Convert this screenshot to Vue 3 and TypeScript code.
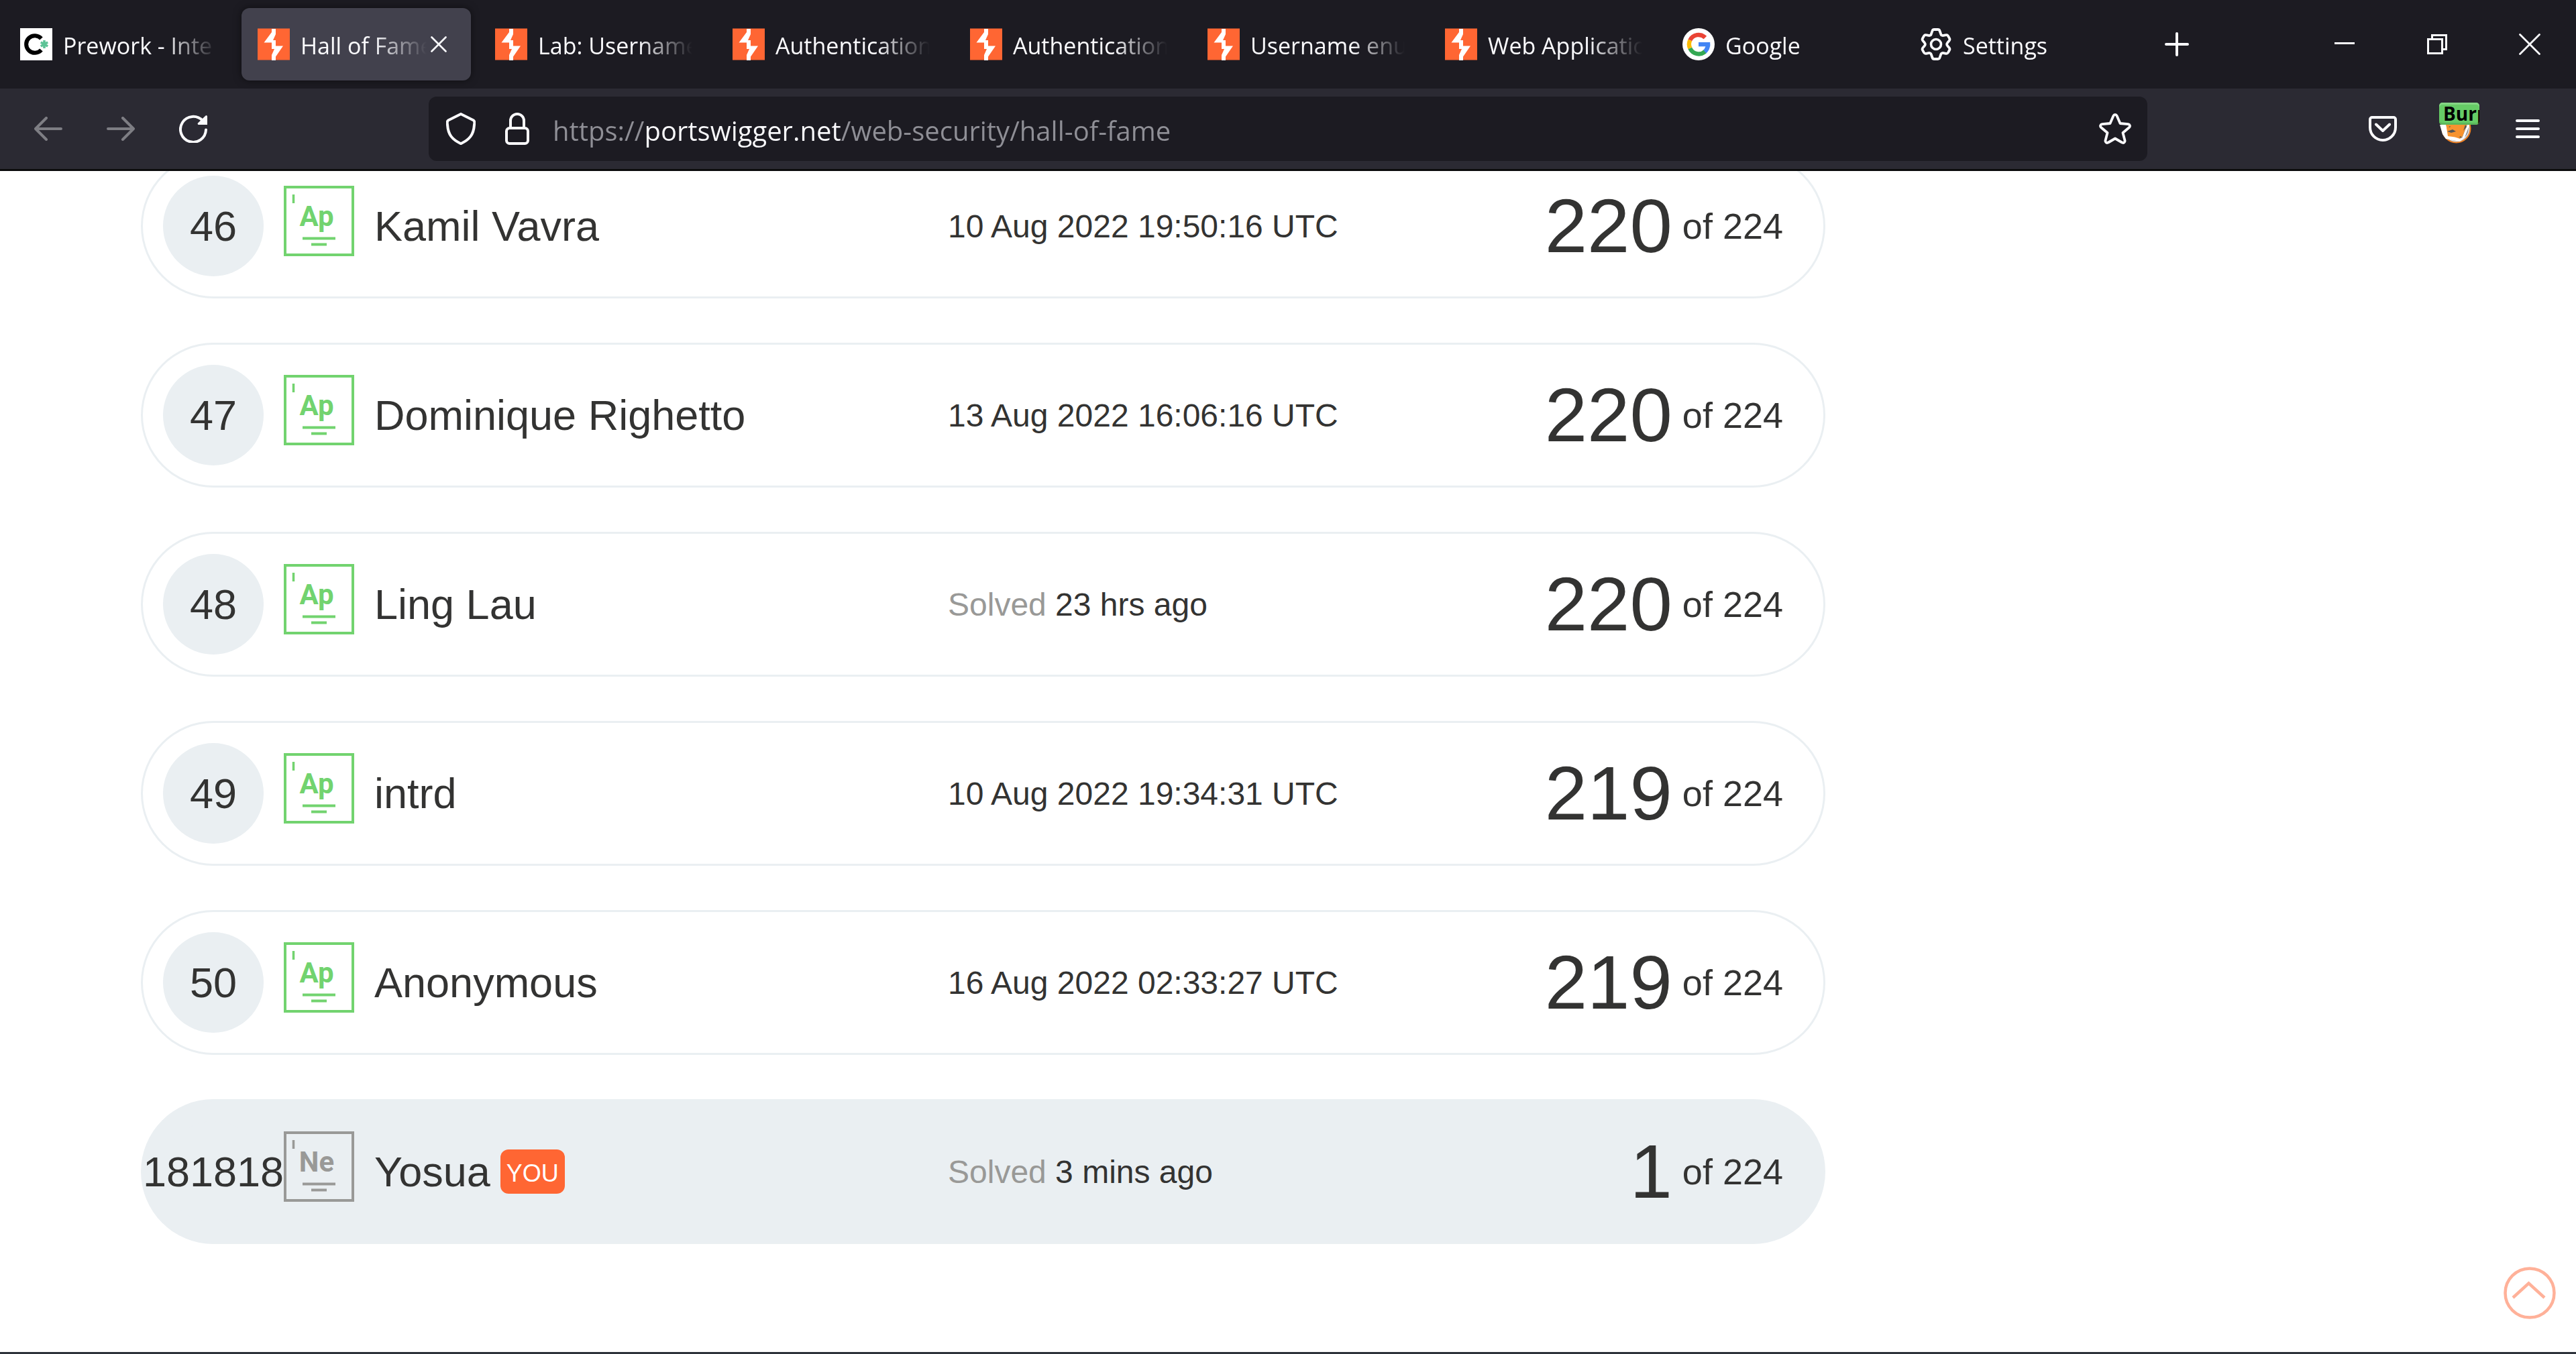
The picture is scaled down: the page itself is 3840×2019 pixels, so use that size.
<script setup lang="ts">
import { ref } from 'vue'

type TabIcon = 'prework' | 'portswigger' | 'google' | 'gear'

interface Tab {
  title: string
  icon: TabIcon
}

interface Entry {
  rank: string
  level: string
  name: string
  when: string
  relative: boolean
  solved: number
  you?: boolean
}

const tabs: Tab[] = [
  { title: 'Prework - Inte', icon: 'prework' },
  { title: 'Hall of Fame', icon: 'portswigger' },
  { title: 'Lab: Username', icon: 'portswigger' },
  { title: 'Authentication', icon: 'portswigger' },
  { title: 'Authentication', icon: 'portswigger' },
  { title: 'Username enu', icon: 'portswigger' },
  { title: 'Web Applicatio', icon: 'portswigger' },
  { title: 'Google', icon: 'google' },
  { title: 'Settings', icon: 'gear' },
]
const active = ref(1)
const address = ref('https://portswigger.net/web-security/hall-of-fame')

const total = 224
const entries: Entry[] = [
  { rank: '46', level: 'Ap', name: 'Kamil Vavra', when: '10 Aug 2022 19:50:16 UTC', relative: false, solved: 220 },
  { rank: '47', level: 'Ap', name: 'Dominique Righetto', when: '13 Aug 2022 16:06:16 UTC', relative: false, solved: 220 },
  { rank: '48', level: 'Ap', name: 'Ling Lau', when: '23 hrs ago', relative: true, solved: 220 },
  { rank: '49', level: 'Ap', name: 'intrd', when: '10 Aug 2022 19:34:31 UTC', relative: false, solved: 219 },
  { rank: '50', level: 'Ap', name: 'Anonymous', when: '16 Aug 2022 02:33:27 UTC', relative: false, solved: 219 },
  { rank: '181818', level: 'Ne', name: 'Yosua', when: '3 mins ago', relative: true, solved: 1, you: true },
]
</script>

<template>
  <div class="window">
    <header class="chrome">
      <div class="tabstrip">
        <div v-for="(tab, i) in tabs" :key="i" class="tab" :class="{ active: i === active }">
          <button class="tab-main" type="button" @click="active = i">
            <svg v-if="tab.icon === 'portswigger'" class="favicon" viewBox="0 0 48 48">
              <rect y="0.5" width="48" height="47" fill="#ff6633" />
              <path fill="#fff" d="M21 1h6v8l-4 9h4v8.500h11l-11 16V48h-6v-8l4-9h-4V21.500H9.500L21 6z" />
            </svg>
            <svg v-else-if="tab.icon === 'prework'" class="favicon" viewBox="0 0 48 48">
              <rect width="48" height="48" fill="#fff" />
              <path d="M31.500 15.500A12.800 12.800 0 1 0 31.500 32.500" fill="none" stroke="#000" stroke-width="6" />
              <path d="M36 18v12M30.800 21l10.400 6M41.200 21l-10.400 6" stroke="#5cc396" stroke-width="3.600" />
            </svg>
            <svg v-else-if="tab.icon === 'google'" class="favicon" viewBox="0 0 48 48">
              <circle cx="24" cy="24" r="24" fill="#fff" />
              <g fill="none" stroke-width="6.400">
                <path d="M33.900 14.100A14 14 0 0 0 11.300 18" stroke="#ea4335" />
                <path d="M11.300 18A14 14 0 0 0 11.300 30" stroke="#fbbc05" />
                <path d="M11.300 30A14.200 14.200 0 0 0 34 34.500" stroke="#34a853" />
                <path d="M33.300 35A14 14 0 0 0 38 24.200" stroke="#4285f4" />
              </g>
              <path d="M24 21h17.200v6.300H24z" fill="#4285f4" />
            </svg>
            <svg v-else class="favicon" viewBox="0 0 48 48">
              <path
                d="M21.500 2h5a3 3 0 0 1 3 2l1.800 5.200a3 3 0 0 0 4 1.600l3.500-.6a3 3 0 0 1 3.200 1.400l2 3.600a3 3 0 0 1-.3 3.400l-2.600 3.200a3 3 0 0 0 0 4.400l2.600 3.200a3 3 0 0 1 .3 3.400l-2 3.600a3 3 0 0 1-3.200 1.400l-3.500-.6a3 3 0 0 0-4 1.600L29.500 44a3 3 0 0 1-3 2h-5a3 3 0 0 1-3-2l-1.800-5.200a3 3 0 0 0-4-1.600l-3.500.6A3 3 0 0 1 6 36.400l-2-3.600a3 3 0 0 1 .3-3.400l2.600-3.200a3 3 0 0 0 0-4.400l-2.600-3.200a3 3 0 0 1-.3-3.400l2-3.600a3 3 0 0 1 3.200-1.400l3.500.6a3 3 0 0 0 4-1.600L18.500 4a3 3 0 0 1 3-2z"
                fill="none" stroke="#fbfbfe" stroke-width="3.800"
              />
              <circle cx="24" cy="24" r="7.500" fill="none" stroke="#fbfbfe" stroke-width="3.600" />
            </svg>
            <span class="tab-title">{{ tab.title }}</span>
          </button>
          <button v-if="i === active" class="tab-close" type="button" aria-label="Close tab">
            <svg width="24" height="24" viewBox="0 0 24 24"><path d="M1.500 1.500l21 21M22.500 1.500l-21 21" class="line" stroke-width="2.600" /></svg>
          </button>
        </div>
        <button class="new-tab" type="button" aria-label="New tab">
          <svg width="36" height="36" viewBox="0 0 36 36"><path d="M18 2v32M2 18h32" class="line" stroke-width="4" /></svg>
        </button>
        <div class="window-buttons">
          <button type="button" aria-label="Minimise">
            <svg width="32" height="32" viewBox="0 0 32 32"><path d="M1 14.500h30" stroke="#fbfbfe" stroke-width="3" /></svg>
          </button>
          <button type="button" aria-label="Restore">
            <svg width="30" height="30" viewBox="0 0 30 30"><path d="M1.500 7.500h21v21h-21zM7.500 7.500v-6h21v21h-6" fill="none" stroke="#fbfbfe" stroke-width="3" /></svg>
          </button>
          <button type="button" aria-label="Close">
            <svg width="32" height="32" viewBox="0 0 32 32"><path d="M1.500 1.500l29 29M30.500 1.500l-29 29" class="line" stroke-width="2.800" /></svg>
          </button>
        </div>
      </div>

      <div class="toolbar">
        <button class="tool dim" type="button" aria-label="Back">
          <svg width="42" height="36" viewBox="0 0 42 36"><path d="M40 18H2M18 2L2 18l16 16" class="line" stroke-width="4" /></svg>
        </button>
        <button class="tool dim" type="button" aria-label="Forward">
          <svg width="42" height="36" viewBox="0 0 42 36"><path d="M2 18h38M24 2l16 16-16 16" class="line" stroke-width="4" /></svg>
        </button>
        <button class="tool" type="button" aria-label="Reload">
          <svg width="42" height="42" viewBox="0 0 42 42">
            <path d="M35 9A19 19 0 1 0 40 22.500" class="line" stroke-width="4" />
            <path d="M42 2.500V15H29a1.500 1.500 0 0 1-1-2.500L39.500 1.500A1.500 1.500 0 0 1 42 2.500z" fill="#fbfbfe" />
          </svg>
        </button>
        <div class="urlbar">
          <button type="button" aria-label="Tracking protection">
            <svg width="44" height="48" viewBox="0 0 44 48"><path d="M22 2L41 11.500Q43 13 42 18C41 33 35 40 22 46.200 9 40 3 33 2 18 1 13 3 11.500 3 11.500z" class="line" stroke-width="4" /></svg>
          </button>
          <button type="button" aria-label="Connection secure">
            <svg width="36" height="48" viewBox="0 0 36 48"><path d="M8 22V12a10 10 0 0 1 20 0v10M6.500 23h23a4.500 4.500 0 0 1 4.500 4.500v14a4.500 4.500 0 0 1-4.500 4.500h-23A4.500 4.500 0 0 1 2 41.500v-14A4.500 4.500 0 0 1 6.500 23z" class="line" stroke-width="4" /></svg>
          </button>
          <input v-model="address" class="address" type="text" aria-label="Address" spellcheck="false" />
          <button type="button" aria-label="Bookmark this page">
            <svg width="48" height="48" viewBox="0 0 48 48"><path d="M21.500 4.500a2.800 2.800 0 0 1 5 0l5 11.500 12 1.100a2.800 2.800 0 0 1 1.500 4.900l-9.500 8 3 11.500a2.800 2.800 0 0 1-4.200 3L24 38.500 13.700 44.500a2.800 2.800 0 0 1-4.200-3L12.500 30 3 22a2.800 2.800 0 0 1 1.500-4.900l12-1.100z" class="line" stroke-width="3.800" /></svg>
          </button>
        </div>
        <button class="tool" type="button" aria-label="Save to Pocket">
          <svg width="42" height="38" viewBox="0 0 42 38"><path d="M5 2h32a3 3 0 0 1 3 3v12a19 19 0 0 1-38 0V5a3 3 0 0 1 3-3zM11 12.500L21 22l10-9.500" class="line" stroke-width="4" /></svg>
        </button>
        <button class="tool proxy" type="button" aria-label="Proxy switcher">
          <svg width="48" height="48" viewBox="0 0 48 48">
            <circle cx="25.500" cy="23.500" r="21" fill="#8d9094" stroke="#f58220" stroke-width="2" />
            <circle cx="25.500" cy="23.500" r="19" fill="none" stroke="#e8e8e8" stroke-width="1.500" />
            <path d="M1 18l9-1 4 16 20 5 8-20 3 1-7 18-7 6-21-4-5-7z" fill="#fff" />
            <path d="M10 16h32l-7 19-4 4q-6-3-18-4z" fill="#f7932f" />
            <path d="M12 28l8-3 5 3-7 2zM14 21l3-1-1 2zM39 18l-3 9 5-6zM30 36l3-1-1 3z" fill="#555" />
          </svg>
          <span class="badge">Burp</span>
        </button>
        <button class="tool" type="button" aria-label="Menu">
          <svg width="36" height="30" viewBox="0 0 36 30"><path d="M2 3h32M2 15h32M2 27h32" class="line" stroke-width="4" /></svg>
        </button>
      </div>
    </header>

    <main class="page">
      <table class="fame">
        <colgroup>
          <col class="c-rank" />
          <col class="c-name" />
          <col class="c-date" />
          <col />
        </colgroup>
        <tbody>
          <tr v-for="e in entries" :key="e.rank" :class="{ you: e.you }">
            <td><span class="rank">{{ e.rank }}</span></td>
            <td>
              <div class="person">
                <svg class="level" viewBox="0 0 105 105" width="105" height="105">
                  <rect x="2" y="2" width="101" height="101" fill="none" stroke="currentColor" stroke-width="4" />
                  <path d="M14.500 13v13" stroke="currentColor" stroke-width="3.500" />
                  <text x="49" y="60" text-anchor="middle" fill="currentColor">{{ e.level }}</text>
                  <path d="M28 78.500h49M41 87.500h23" stroke="currentColor" stroke-width="4" />
                </svg>
                <span>{{ e.name }}</span>
                <span v-if="e.you" class="tag">YOU</span>
              </div>
            </td>
            <td class="date"><span v-if="e.relative" class="muted">Solved </span>{{ e.when }}</td>
            <td>
              <div class="score"><span class="solved">{{ e.solved }}</span><span>of {{ total }}</span></div>
            </td>
          </tr>
        </tbody>
      </table>
      <button class="to-top" type="button" aria-label="Back to top">
        <svg width="78" height="78" viewBox="0 0 78 78"><g fill="none" stroke="#ffb199" stroke-width="4.500"><circle cx="39" cy="39" r="36.500" /><path d="M14 46l23.500-21.500L61 46" /></g></svg>
      </button>
    </main>
    <footer class="footer"></footer>
  </div>
</template>

<style>
body {
  margin: 0;
  background: #fff;
}
</style>

<style scoped>
.window {
  display: flex;
  flex-direction: column;
  min-height: 100vh;
  overflow: hidden;
  font-family: "Liberation Sans", Arial, sans-serif;
  color: #333332;
}
button {
  display: flex;
  align-items: center;
  justify-content: center;
  padding: 0;
  border: 0;
  background: none;
  color: inherit;
  font: inherit;
}
svg {
  display: block;
  flex: none;
}
.line {
  fill: none;
  stroke: #fbfbfe;
  stroke-linecap: round;
  stroke-linejoin: round;
}
.chrome {
  border-bottom: 3px solid #0c0c0d;
  background: #2b2a33;
  color: #fbfbfe;
  font-family: "Open Sans", "Noto Sans", sans-serif;
}
.tabstrip {
  display: flex;
  align-items: center;
  gap: 12px;
  height: 132px;
  padding-left: 6px;
  background: #1c1b22;
}
.tab {
  display: flex;
  flex: 0 1 342px;
  min-width: 0;
  height: 108px;
  box-sizing: border-box;
  padding: 0 24px;
  border-radius: 12px;
}
.tab.active {
  padding-right: 36px;
  background: #42414d;
  box-shadow: 0 0 12px rgba(0, 0, 0, 0.5);
}
.tab-main {
  flex: 1;
  gap: 16px;
  min-width: 0;
}
.favicon {
  width: 48px;
  height: 48px;
}
.tab-title {
  flex: 1;
  overflow: hidden;
  padding-top: 4px;
  font-size: 34px;
  line-height: 48px;
  text-align: left;
  white-space: nowrap;
  mask-image: linear-gradient(to left, transparent, #000 80px);
}
.tab-close {
  width: 30px;
  justify-content: flex-end;
}
.new-tab {
  width: 106px;
  height: 108px;
}
.window-buttons {
  display: flex;
  margin-left: auto;
}
.window-buttons button {
  width: 138px;
  height: 132px;
}
.toolbar {
  display: flex;
  align-items: center;
  height: 120px;
  padding: 0 18px;
}
.tool {
  position: relative;
  width: 108px;
  height: 96px;
}
.dim svg {
  opacity: 0.4;
}
.urlbar {
  display: flex;
  flex: 1;
  align-items: center;
  min-width: 0;
  height: 96px;
  margin: 0 297px;
  padding: 0 6px;
  box-sizing: border-box;
  border-radius: 12px;
  background: #1c1b22;
}
.urlbar button {
  width: 84px;
  height: 84px;
}
.address {
  flex: 1;
  min-width: 0;
  height: 72px;
  box-sizing: border-box;
  margin-left: 11px;
  padding: 4px 0 0;
  border: 0;
  outline: 0;
  background: linear-gradient(to right, #8f8f96 136px, #fbfbfe 136px 430px, #8f8f96 430px);
  background-clip: text;
  color: transparent;
  font: 40px "Open Sans", "Noto Sans", sans-serif;
}
.badge {
  position: absolute;
  top: 9px;
  left: 30px;
  width: 60px;
  height: 33px;
  box-sizing: border-box;
  padding-left: 6px;
  overflow: hidden;
  border-radius: 5px;
  background: #66cc66;
  box-shadow: inset 0 3px #85d685, inset 0 -3px #5cb85c;
  color: #000;
  font-size: 28px;
  font-weight: 700;
  line-height: 33px;
  text-align: left;
}
.page {
  position: relative;
  flex: 1;
  overflow: hidden;
  padding: 0 1119px 0 210px;
}
/* The list is scrolled so that its first row slides under the toolbar. */
.fame {
  width: 100%;
  margin-top: -92px;
  border-collapse: separate;
  border-spacing: 0 66px;
  table-layout: fixed;
}
.c-rank {
  width: 213px;
}
.c-name {
  width: 990px;
}
.c-date {
  width: 750px;
}
td {
  height: 210px;
  padding: 0;
  border: 0 solid #eaeff2;
  border-width: 3px 0;
  font-size: 63px;
  vertical-align: middle;
  white-space: nowrap;
}
td:first-child {
  border-left-width: 3px;
  border-radius: 108px 0 0 108px;
}
td:last-child {
  padding-right: 60px;
  border-right-width: 3px;
  border-radius: 0 108px 108px 0;
}
.you td {
  background: #eaeff2;
}
.rank {
  display: flex;
  align-items: center;
  justify-content: center;
  width: 150px;
  height: 150px;
  margin: 0 auto;
  border-radius: 50%;
  background: #eaeff2;
}
.person {
  display: flex;
  align-items: center;
}
.level {
  margin: 0 30px 15px 0;
  color: #72d36f;
  font-family: "Liberation Sans Narrow", "Arial Narrow", Roboto, sans-serif;
  font-size: 42px;
  font-weight: 700;
}
.you .level {
  color: #999997;
}
.tag {
  margin-left: 15px;
  padding: 15px 9px 9px;
  border-radius: 12px;
  background: #ff6633;
  color: #fff;
  font-size: 36px;
  line-height: 42px;
}
td.date {
  font-size: 48px;
}
.muted {
  color: #999997;
}
.score {
  display: flex;
  align-items: center;
  justify-content: flex-end;
  gap: 15px;
  font-size: 54px;
}
.solved {
  font-size: 114px;
  line-height: 120px;
}
.to-top {
  position: absolute;
  right: 30px;
  bottom: 49px;
}
.footer {
  height: 3px;
  background: #2d323a;
}
</style>
